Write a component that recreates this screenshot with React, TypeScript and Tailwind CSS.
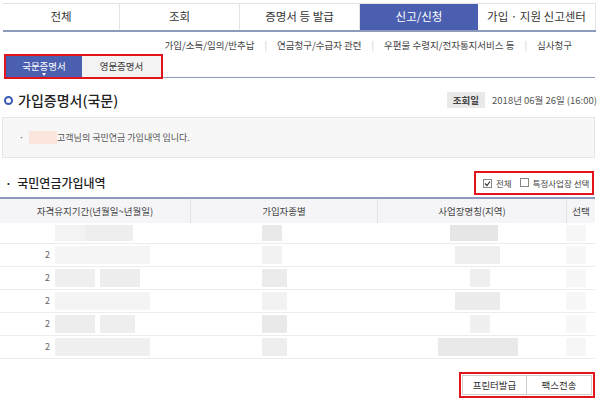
import React from "react";

const NAV = ["전체", "조회", "증명서 등 발급", "신고/신청", "가입 · 지원 신고센터"];
const NAV_W = ["w-[117px]", "w-[120px]", "w-[120px]", "w-[118px]", "w-[118px]"];
const SUB = ["가입/소득/임의/반추납", "연금청구/수급자 관련", "우편물 수령지/전자통지서비스 등", "심사청구"];

// blurred mosaic tiles per row: [left + width, shade]
const BLUR: [string, string][][] = [
  [["left-[55px] w-[30px]", "bg-[#f3f3f3]"], ["left-[85px] w-[48px]", "bg-[#eeeeee]"], ["left-[262px] w-[20px]", "bg-[#e9e9e9]"], ["left-[450px] w-[48px]", "bg-[#e6e6e6]"], ["left-[566px] w-[20px]", "bg-[#f6f6f6]"]],
  [["left-[55px] w-[95px]", "bg-[#f5f5f5]"], ["left-[262px] w-[20px]", "bg-[#f2f2f2]"], ["left-[455px] w-[45px]", "bg-[#efefef]"], ["left-[566px] w-[20px]", "bg-[#f7f7f7]"]],
  [["left-[55px] w-[40px]", "bg-[#efefef]"], ["left-[100px] w-[40px]", "bg-[#ededed]"], ["left-[262px] w-[25px]", "bg-[#ebebeb]"], ["left-[470px] w-[20px]", "bg-[#efefef]"], ["left-[566px] w-[20px]", "bg-[#f7f7f7]"]],
  [["left-[55px] w-[95px]", "bg-[#f4f4f4]"], ["left-[262px] w-[25px]", "bg-[#f2f2f2]"], ["left-[455px] w-[45px]", "bg-[#ececec]"], ["left-[566px] w-[20px]", "bg-[#f7f7f7]"]],
  [["left-[55px] w-[40px]", "bg-[#ededed]"], ["left-[100px] w-[35px]", "bg-[#eeeeee]"], ["left-[262px] w-[25px]", "bg-[#e9e9e9]"], ["left-[470px] w-[20px]", "bg-[#f0f0f0]"], ["left-[566px] w-[20px]", "bg-[#f7f7f7]"]],
  [["left-[55px] w-[95px]", "bg-[#f0f0f0]"], ["left-[262px] w-[25px]", "bg-[#eeeeee]"], ["left-[438px] w-[80px]", "bg-[#e9e9e9]"], ["left-[566px] w-[20px]", "bg-[#f6f6f6]"]],
];

function Check({ checked }: { checked?: boolean }) {
  return (
    <span className="inline-flex h-[9px] w-[9px] shrink-0 items-center justify-center border border-[#888] bg-white">
      {checked && (
        <svg width="7" height="7" viewBox="0 0 7 7">
          <path d="M1 3.5 L3 5.5 L6 1.5" stroke="#333" strokeWidth="1.2" fill="none" />
        </svg>
      )}
    </span>
  );
}

export default function App() {
  return (
    <div className="relative h-[401px] w-[600px] overflow-hidden bg-white text-[#444]" style={{ fontFamily: '"Noto Sans CJK KR", "Noto Sans", sans-serif' }}>
      {/* top nav */}
      <div className="ml-[3px] mt-[3px] flex h-[29px] w-[593px] border-t border-[#e2e2e2] border-b-2 border-b-[#8e9abb]">
        {NAV.map((t, i) => (
          <div
            key={t}
            className={`${NAV_W[i]} flex items-center justify-center text-[11.5px] ${i === 3 ? "bg-[#4b5fb0] text-white" : "border-r border-[#e4e4e4] text-[#333]"}`}
          >
            {t}
          </div>
        ))}
      </div>

      {/* sub menu */}
      <div className="mt-[6px] flex h-[14px] items-center justify-end pr-[28px] text-[9.5px] text-[#444]">
        {SUB.map((s, i) => (
          <React.Fragment key={s}>
            {i > 0 && <span className="mx-[10px] text-[#ccc]">|</span>}
            <span>{s}</span>
          </React.Fragment>
        ))}
      </div>

      {/* cert tabs */}
      <div className="mt-[2px] flex items-end pl-[4px] pr-[5px]">
        <div className="flex h-[25px] border-2 border-[#e1141c]">
          <div className="relative flex w-[76px] items-center justify-center bg-[#4b5fb0] text-[9.5px] text-white">
            국문증명서
            <span className="absolute bottom-[1px] left-1/2 -ml-[2px] h-0 w-0 border-x-[2px] border-t-[3px] border-x-transparent border-t-white" />
          </div>
          <div className="flex w-[79px] items-center justify-center bg-[#f3f3f3] text-[9.5px] text-[#333]">영문증명서</div>
        </div>
        <div className="mb-[1px] flex-1 border-b border-[#8e9abb]" />
      </div>

      {/* heading */}
      <div className="mt-[11px] flex h-[20px] items-center pl-[4px] pr-[3px]">
        <span className="h-[9px] w-[9px] rounded-full border-[2px] border-[#3b58b2]" />
        <span className="ml-[5px] text-[14px] font-medium text-[#222]">가입증명서(국문)</span>
        <div className="ml-auto flex items-center text-[9.5px]">
          <span className="flex h-[16px] items-center bg-[#e9e9e9] px-[6px] font-bold text-[#444]">조회일</span>
          <span className="ml-[7px] text-[#555]">2018년 06월 26일 (16:00)</span>
        </div>
      </div>

      {/* notice box */}
      <div className="ml-[2px] mt-[7px] flex h-[41px] w-[593px] items-center border border-[#e6e6e6] bg-[#f7f7f7] pl-[16px] text-[9px] text-[#555]">
        <span>·</span>
        <span className="ml-[5px] h-[13px] w-[28px] bg-[#fbe5dc]" />
        <span>고객님의 국민연금 가입내역 입니다.</span>
      </div>

      {/* section title */}
      <div className="mt-[13px] flex h-[24px] items-center pl-[5px] pr-[6px]">
        <span className="text-[12px] font-medium text-[#222]">·&nbsp;&nbsp;국민연금가입내역</span>
        <div className="ml-auto flex h-[24px] w-[120px] items-center whitespace-nowrap border-2 border-[#e1141c] pl-[7px] text-[8.5px] text-[#444]">
          <Check checked />
          <span className="ml-[4px]">전체</span>
          <span className="ml-[8px]"><Check /></span>
          <span className="ml-[4px]">특정사업장 선택</span>
        </div>
      </div>

      {/* table */}
      <div className="relative mt-[2px] w-[595px] border-t-2 border-[#8e9abb]">
        <div className="flex h-[24px] bg-[#f5f5f7] text-[9.5px] text-[#444]">
          <div className="flex w-[191px] items-center justify-center border-r border-[#e2e2e2]">자격유지기간(년월일~년월일)</div>
          <div className="flex w-[187px] items-center justify-center border-r border-[#e2e2e2]">가입자종별</div>
          <div className="flex w-[189px] items-center justify-center border-r border-[#e2e2e2]">사업장명칭(지역)</div>
          <div className="flex flex-1 items-center justify-center">선택</div>
        </div>
        {BLUR.map((row, r) => (
          <div key={r} className={`relative flex ${r === 0 ? "h-[21px]" : "h-[23px]"} items-center border-b border-[#ececec] text-[9px] text-[#666]`}>
            {r > 0 && <span className="ml-[45px]">2</span>}
            {row.map(([pos, shade], k) => (
              <span key={k} className={`absolute top-[2px] bottom-[2px] ${pos} ${shade}`} />
            ))}
          </div>
        ))}
      </div>

      {/* buttons */}
      <div className="mt-[13px] flex justify-end pr-[5px]">
        <div className="flex h-[26px] border-2 border-[#e1141c] p-[1px]">
          <div className="flex w-[65px] items-center justify-center border border-[#cfcfcf] bg-white text-[9.5px] text-[#333]">프린터발급</div>
          <div className="flex w-[65px] items-center justify-center border border-l-0 border-[#cfcfcf] bg-white text-[9.5px] text-[#333]">팩스전송</div>
        </div>
      </div>
    </div>
  );
}
